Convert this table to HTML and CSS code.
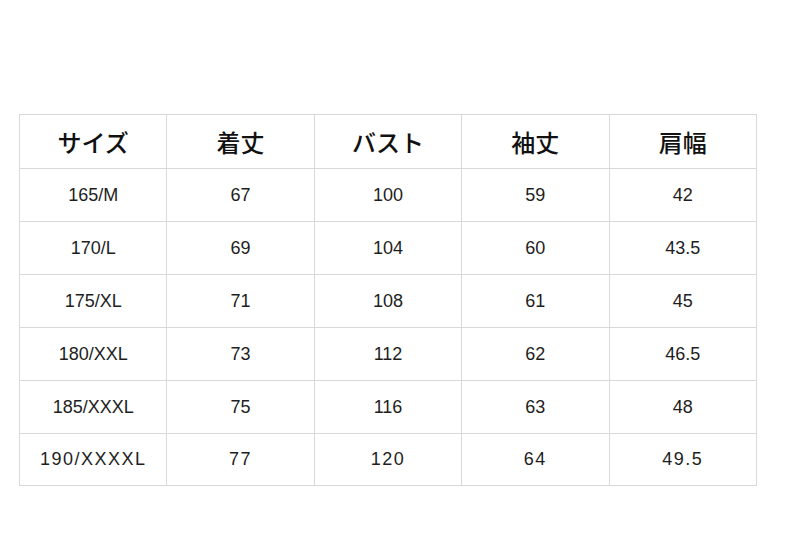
FILE: index.html
```html
<!DOCTYPE html>
<html lang="ja">
<head>
<meta charset="utf-8">
<link rel="stylesheet" href="styles.css">
</head>
<body>
<div class="page">
  <table class="size-table">
    <thead>
      <tr><th>サイズ</th><th>着丈</th><th>バスト</th><th>袖丈</th><th>肩幅</th></tr>
    </thead>
    <tbody>
      <tr><td>165/M</td><td>67</td><td>100</td><td>59</td><td>42</td></tr>
      <tr><td>170/L</td><td>69</td><td>104</td><td>60</td><td>43.5</td></tr>
      <tr><td>175/XL</td><td>71</td><td>108</td><td>61</td><td>45</td></tr>
      <tr><td>180/XXL</td><td>73</td><td>112</td><td>62</td><td>46.5</td></tr>
      <tr><td>185/XXXL</td><td>75</td><td>116</td><td>63</td><td>48</td></tr>
      <tr class="wide"><td>190/XXXXL</td><td>77</td><td>120</td><td>64</td><td>49.5</td></tr>
    </tbody>
  </table>
</div>
</body>
</html>
```
FILE: styles.css
```css
html, body {
  margin: 0;
  padding: 0;
  background: #ffffff;
}
.page {
  padding: 114px 0 0 19px;
}
.size-table {
  border-collapse: collapse;
  table-layout: fixed;
  width: 738px;
  color: #1e1e1e;
  font-family: "Liberation Sans", Arial, "Noto Sans CJK JP", sans-serif;
}
.size-table th,
.size-table td {
  border: 1px solid #d9d9d9;
  padding: 0;
  text-align: center;
  vertical-align: middle;
}
.size-table th {
  height: 53px;
  font-family: "Noto Sans CJK JP", sans-serif;
  font-size: 24px;
  font-weight: 500;
  color: #111;
}
.size-table td {
  height: 52px;
  font-size: 18px;
}
.size-table tr.wide td {
  letter-spacing: 1.5px;
  height: 51px;
}
```
